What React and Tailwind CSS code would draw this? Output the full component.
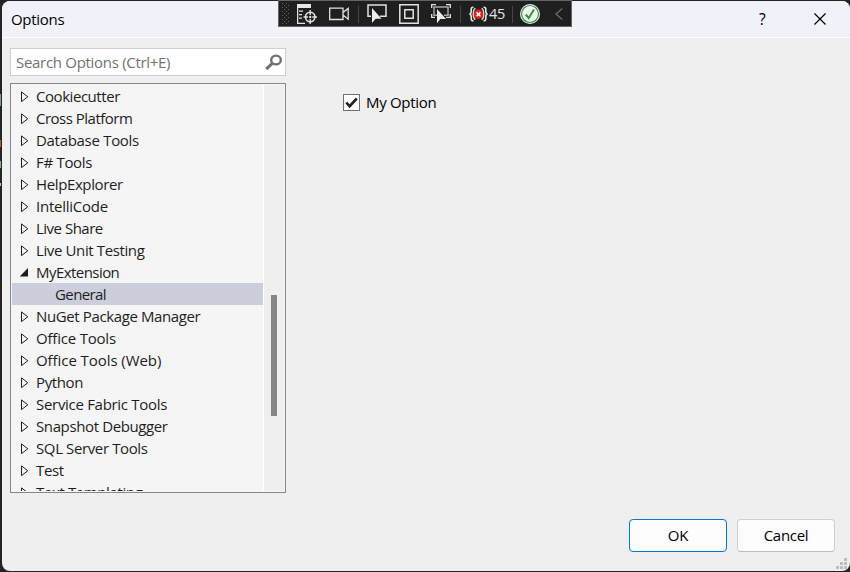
import React from 'react';

const before = ['Cookiecutter', 'Cross Platform', 'Database Tools', 'F# Tools', 'HelpExplorer', 'IntelliCode', 'Live Share', 'Live Unit Testing'];
const after = ['NuGet Package Manager', 'Office Tools', 'Office Tools (Web)', 'Python', 'Service Fabric Tools', 'Snapshot Debugger', 'SQL Server Tools', 'Test', 'Text Templating'];

const spacing = {
  Cookiecutter: 'tracking-[-0.45px]',
  'Cross Platform': 'tracking-[-0.5px]',
  'Live Share': 'tracking-[-0.5px]',
  'Database Tools': 'tracking-[-0.3px]',
  'F# Tools': 'tracking-[-0.3px]',
  IntelliCode: 'tracking-[-0.25px]',
  MyExtension: 'tracking-[-0.55px]',
  'Office Tools': 'tracking-[-0.2px]',
  'Office Tools (Web)': 'tracking-[-0.07px]',
  'Service Fabric Tools': 'tracking-[-0.3px]',
};

function Row({ label, open }) {
  return (
    <div className="flex h-[22px] shrink-0 items-center pl-2">
      <svg className="mr-[6px] mt-[2px] h-[12px] w-[10px] shrink-0" viewBox="0 0 10 12">
        {open ? <path d="M8 1V9.5H-.3Z" fill="#1e1e1e" /> : <path d="M1.5 .9V10.6L7.8 5.8Z" fill="none" stroke="#1e1e1e" strokeWidth="1" />}
      </svg>
      <span className={spacing[label] || 'tracking-[-0.38px]'}>{label}</span>
    </div>
  );
}

function Separator({ className }) {
  return <div className={'h-[17px] w-px bg-[#464646] ' + className} />;
}

function Toolbar() {
  const dots = [];
  for (let r = 0; r < 11; r++) for (let c = 0; c < 2; c++) dots.push([c * 4 + (r % 2) * 2, r * 2]);
  return (
    <div className="absolute left-[278px] top-0 flex h-[27px] w-[294px] items-center border border-[#646464] bg-[#1f1f1f] pl-[3px] pt-[1px]">
      <svg className="h-[22px] w-[7px] shrink-0" viewBox="0 0 7 22">
        {dots.map(([x, y]) => <rect key={x + '-' + y} x={x} y={y} width="1" height="1" fill="#626262" />)}
      </svg>
      <svg className="ml-[8px] h-5 w-5 shrink-0" viewBox="0 0 20 20" fill="none" stroke="#e2e2e2">
        <path d="M0 0H14V4H0Z" fill="#e6e6e6" stroke="none" />
        <path d="M.6 3V19.4H8" strokeWidth="1.3" />
        <path d="M2 7.2H6M2 10.7H5M2 14.2H5" strokeWidth="1.3" />
        <circle cx="13.2" cy="13" r="4.7" strokeWidth="1.6" />
        <path d="M13.2 6V11M13.2 15V20M6.5 13H11M15.2 13H20" strokeWidth="1.4" />
        <circle cx="13.2" cy="13" r="1.2" fill="#e2e2e2" stroke="none" />
      </svg>
      <svg className="ml-[12px] h-[14px] w-5 shrink-0" viewBox="0 0 20 14" fill="none" stroke="#e2e2e2" strokeWidth="1.3">
        <path d="M.7 1.2H14V12.5H.7ZM14.3 5.3L19.2 1.4V12.2L14.3 8.3" />
      </svg>
      <Separator className="ml-[9px]" />
      <svg className="ml-[8px] h-5 w-5 shrink-0" viewBox="0 0 20 20">
        <path d="M4 12.2H1V1H19V12.2H13" fill="none" stroke="#e2e2e2" strokeWidth="1.5" />
        <path d="M5 4V19L8.7 14.8H14.5Z" fill="#eeeeee" />
      </svg>
      <svg className="ml-[12px] h-5 w-5 shrink-0" viewBox="0 0 20 20" fill="none" stroke="#e2e2e2" strokeWidth="1.5">
        <path d="M.8 .8H19.2V19.2H.8ZM5.8 5.8H14.2V14.2H5.8Z" />
      </svg>
      <svg className="ml-[12px] h-5 w-5 shrink-0" viewBox="0 0 20 20">
        <path d="M.7 4V.7H5M15 .7H19.3V4M.7 10V13.3H4M19.3 10V13.3H15" fill="none" stroke="#e2e2e2" strokeWidth="1.3" />
        <path d="M6 11.3H3V3H17V11.3H13" fill="none" stroke="#a8a8a8" strokeWidth="1.5" />
        <path d="M6 5V19.3L9.3 15H15Z" fill="#eeeeee" />
      </svg>
      <Separator className="ml-[9px]" />
      <svg className="ml-[8px] h-4 w-[19px] shrink-0" viewBox="0 0 19 16" fill="none">
        <path d="M4.5 1.2Q2.2 1 2.2 3.2V5.5Q2.2 7.8.4 8Q2.2 8.2 2.2 10.5V12.8Q2.2 15 4.5 14.8M14.5 1.2Q16.8 1 16.8 3.2V5.5Q16.8 7.8 18.6 8Q16.8 8.2 16.8 10.5V12.8Q16.8 15 14.5 14.8" stroke="#e6e6e6" strokeWidth="1.6" />
        <path d="M6.5 2.4Q4.3 3.2 4.3 8T6.5 13.6M12.5 2.4Q14.7 3.2 14.7 8T12.5 13.6" stroke="#d5d5d5" strokeWidth="1.5" />
        <circle cx="9.5" cy="8.3" r="4.7" fill="#ec2317" />
        <path d="M7.6 6.4L11.4 10.2M11.4 6.4L7.6 10.2" stroke="#fff" strokeWidth="1.5" />
      </svg>
      <span className="ml-px w-[17px] text-[14.5px] leading-5 tracking-[-0.3px] text-[#e5e5e5]">45</span>
      <Separator className="ml-[6px]" />
      <svg className="ml-[7px] h-5 w-5 shrink-0" viewBox="0 0 20 20" fill="none">
        <circle cx="10" cy="10" r="10" fill="#f2f2f2" />
        <circle cx="10" cy="10" r="8.5" stroke="#32983a" strokeWidth="1.2" />
        <path d="M5.7 10.5L8.7 14L14 5.5" stroke="#32983a" strokeWidth="2" />
      </svg>
      <svg className="ml-[15px] h-3 w-2 shrink-0" viewBox="0 0 8 12" fill="none"><path d="M7.2 .5L1 6L7.2 11.5" stroke="#6a6a6a" strokeWidth="1.3" /></svg>
    </div>
  );
}

export default function App() {
  return (
    <div className="relative flex h-[572px] w-[850px] overflow-hidden bg-[#242424] pb-[1px] pl-[2px] pt-[1px] font-['Open_Sans','Noto_Sans',sans-serif] text-[15px] leading-[22px] tracking-[-0.3px] text-[#1e1e1e] [font-stretch:89%]">
      <div className="absolute left-0 top-[94px] h-[12px] w-px bg-[#71a69a]" />
      <div className="absolute left-0 top-[140px] h-[7px] w-px bg-[#b85a3c]" />
      <div className="absolute left-0 top-[161px] h-[7px] w-px bg-[#8eae8a]" />
      <div className="absolute left-0 top-[183px] h-[3px] w-px bg-[#c8c59a]" />
      <div className="flex w-[848px] flex-col overflow-hidden rounded-[8px] bg-[#efefef]">
        <header className="flex h-[37px] shrink-0 items-center border-b border-white bg-[#f1f2f9] pl-[9px] text-black">
          <span className="flex-1 pb-px">Options</span>
          <span className="mr-[47px] w-[8px] text-[15.5px]">?</span>
          <svg className="mr-[24px] h-[12px] w-[12px]" viewBox="0 0 13 13"><path d="M.5 .5L12.5 12.5M12.5 .5L.5 12.5" stroke="#000" strokeWidth="1.3" /></svg>
        </header>
        <main className="flex flex-1 pl-2 pt-[10px]">
          <div className="flex w-[276px] flex-col">
            <div className="flex h-[28px] items-center justify-between border border-[#ccceDB] bg-white pl-[5px] pr-[3px] text-[#717171]">
              <span>Search Options (Ctrl+E)</span>
              <svg className="h-[17px] w-[17px]" viewBox="0 0 17 17" fill="none" stroke="#717171">
                <ellipse cx="11" cy="6" rx="4.8" ry="4.4" strokeWidth="2.4" />
                <path d="M7.5 9.2L1.2 15.2" strokeWidth="3" />
              </svg>
            </div>
            <div className="mt-[7px] flex h-[410px] border border-[#828790] bg-[#f5f5f5] p-px">
              <div className="flex w-[251px] flex-col overflow-hidden">
                {before.map((label) => <Row key={label} label={label} />)}
                <Row label="MyExtension" open />
                <div className="h-[22px] shrink-0 bg-[#cccedb] pl-[43px] tracking-[-0.6px]">General</div>
                {after.map((label) => <Row key={label} label={label} />)}
              </div>
              <div className="flex-1 border-l border-white bg-[#efefef] pl-[7px] pt-[210px]">
                <div className="h-[121px] w-[6px] bg-[#868686]" />
              </div>
            </div>
          </div>
          <div className="flex flex-1 flex-col">
            <label className="ml-[57px] mt-[43px] flex h-[22px] items-center text-black">
              <span className="mr-[6px] flex h-[17px] w-[17px] items-center justify-center border border-[#707070] bg-white">
                <svg className="h-[13px] w-[13px]" viewBox="0 0 13 13"><path d="M1.3 6.5L4.6 10.2L11.8 2.5" fill="none" stroke="#212121" strokeWidth="2.6" /></svg>
              </span>
              <span className="pb-px">My Option</span>
            </label>
            <div className="mr-[15px] mt-auto mb-[19px] flex justify-end gap-[10px] text-black">
              <button className="h-[33px] w-[98px] rounded-[4px] border border-[#0078d4] bg-[#fdfdfd] pb-[2px]">OK</button>
              <button className="h-[33px] w-[98px] rounded-[4px] border border-[#d0d0d0] border-b-[#bcbcbc] bg-[#fdfdfd] pb-[2px]">Cancel</button>
            </div>
          </div>
        </main>
      </div>
      <svg className="absolute left-[836px] top-[558px] h-[11px] w-[11px]" viewBox="0 0 11 11" fill="#bcbcbc">
        <path d="M8 0h3v3H8ZM8 4h3v3H8ZM4 4h3v3H4ZM8 8h3v3H8ZM4 8h3v3H4ZM0 8h3v3H0Z" />
      </svg>
      <Toolbar />
    </div>
  );
}
